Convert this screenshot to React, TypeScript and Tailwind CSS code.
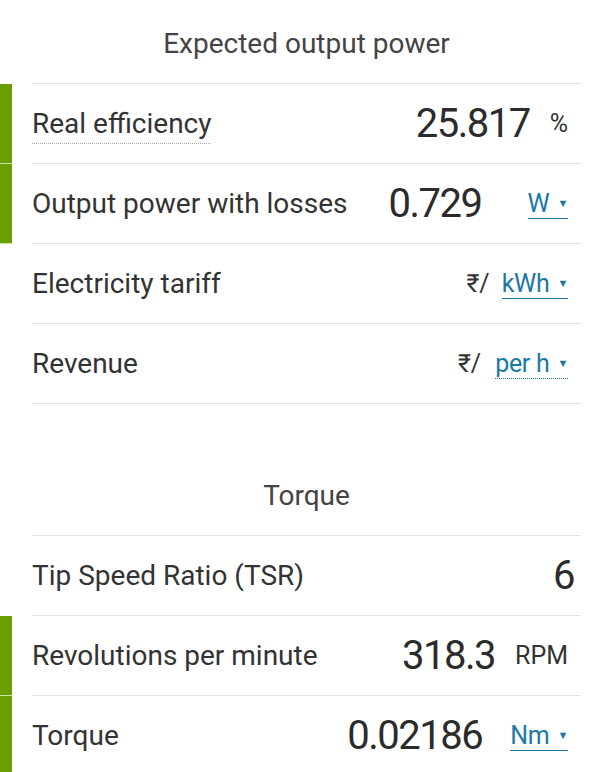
import React from 'react';

type Row = {
  label: string;
  hint?: boolean;
  value?: string;
  prefix?: string;
  unit?: string;
  link?: boolean;
  flag?: boolean;
  gap?: string;
};

const power: Row[] = [
  { label: 'Real efficiency', hint: true, value: '25.817', unit: '%', flag: true, gap: 'ml-[20px]' },
  { label: 'Output power with losses', value: '0.729', unit: 'W', link: true, flag: true, gap: 'ml-[46px]' },
  { label: 'Electricity tariff', prefix: '₹/', unit: 'kWh', link: true, gap: 'ml-[12px]' },
  { label: 'Revenue', prefix: '₹/', unit: 'per h', link: true, gap: 'ml-[14px]' },
];

const torque: Row[] = [
  { label: 'Tip Speed Ratio (TSR)', value: '6' },
  { label: 'Revolutions per minute', value: '318.3', unit: 'RPM', flag: true, gap: 'ml-[20px]' },
  { label: 'Torque', value: '0.02186', unit: 'Nm', link: true, flag: true, gap: 'ml-[28px]' },
];

function Unit({ row }: { row: Row }) {
  if (!row.unit) return null;
  if (row.link) {
    return (
      <span
        className={`${row.gap} flex items-center border-b-[1.5px] border-[#1a7aa5] text-[25px] leading-[29px] tracking-[-0.3px] text-[#1a7aa5] ${row.unit === 'per h' ? 'border-dotted border-b-2' : ''}`}
      >
        {row.unit}
        <span className="ml-2 text-[11px]">▼</span>
      </span>
    );
  }
  return <span className={`${row.gap} text-[25px] text-[#333]`}>{row.unit}</span>;
}

function CalcRow({ row }: { row: Row }) {
  return (
    <div className="flex h-[80px]">
      <div className={`w-3 shrink-0 border-b ${row.flag ? 'border-[#cfe3a8] bg-[#6b9e00]' : 'border-white'}`} />
      <div className="ml-5 mr-[31px] flex flex-1 items-center border-b border-[#e3e3e3] pr-[13px]">
        <span
          className={`text-[28px] text-[#333] ${row.hint ? 'underline decoration-[#aaa] decoration-dotted decoration-1 underline-offset-[10px]' : ''}`}
        >
          {row.label}
        </span>
        <div className="ml-auto flex items-center">
          {row.value && (
            <span className={`text-[40px] tracking-[-1.5px] text-[#2b2b2b] ${row.unit ? '' : '-mr-[6px]'}`}>
              {row.value}
            </span>
          )}
          {row.prefix && <span className="text-[25px] text-[#333]">{row.prefix}</span>}
          <Unit row={row} />
        </div>
      </div>
    </div>
  );
}

function Section({ title, rows, top }: { title: string; rows: Row[]; top?: string }) {
  return (
    <div className={top}>
      <div className="ml-8 mr-[31px] flex h-[80px] items-center justify-center border-b border-[#e3e3e3] text-[28px] text-[#444]">
        {title}
      </div>
      {rows.map((r) => (
        <CalcRow key={r.label} row={r} />
      ))}
    </div>
  );
}

export default function App() {
  return (
    <div className="min-h-[772px] w-[612px] bg-white pt-1 font-['Roboto',sans-serif]">
      <Section title="Expected output power" rows={power} />
      <Section title="Torque" rows={torque} top="mt-[52px]" />
    </div>
  );
}
